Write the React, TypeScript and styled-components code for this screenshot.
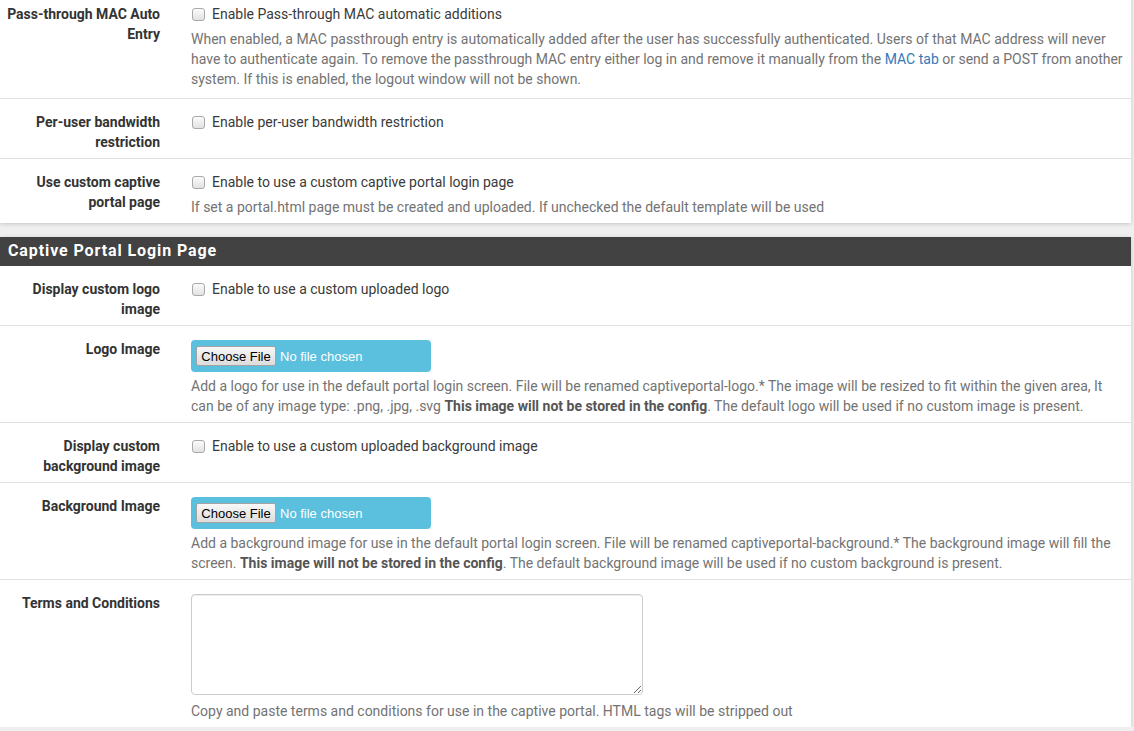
import styled, { createGlobalStyle } from 'styled-components';

const GlobalStyle = createGlobalStyle`
  html, body {
    margin: 0;
    padding: 0;
    background: #efefef;
    font-family: Roboto, "Liberation Sans", Arial, sans-serif;
    font-size: 14px;
    color: #333;
    overflow: hidden;
  }
`;

const Page = styled.div`
  margin-top: -9px;
  padding-right: 3px;
  display: flex;
  flex-direction: column;
  gap: 14px;
`;

const Panel = styled.section`
  background: #fff;
  box-shadow: 0 1px 4px rgba(0, 0, 0, 0.18);
`;

const PanelHeading = styled.h2`
  margin: 0;
  height: 29px;
  padding-left: 8px;
  background: #424242;
  color: #fff;
  font-size: 16px;
  font-weight: 700;
  line-height: 28px;
  letter-spacing: 0.9px;
`;

const Row = styled.div<{ $extra?: number }>`
  display: grid;
  grid-template-columns: 156px 1fr;
  column-gap: 31px;
  padding: 13px 5px ${(p) => 6 + (p.$extra ?? 0)}px 4px;
  border-bottom: 1px solid #e0e0e0;

  &:last-child {
    border-bottom: 0;
  }
`;

const Label = styled.div`
  font-weight: 700;
  text-align: right;
  line-height: 20px;
  color: #333;
`;

const Field = styled.div`
  display: flex;
  flex-direction: column;
  align-items: flex-start;
  min-width: 0;
`;

const CheckLine = styled.label`
  display: flex;
  align-items: center;
  gap: 7px;
  height: 20px;
  line-height: 20px;
  color: #3a3a3a;
`;

const Check = styled.input.attrs({ type: 'checkbox' })`
  appearance: none;
  margin: 0 0 0 1px;
  width: 13px;
  height: 13px;
  border: 1px solid #a9a9a9;
  border-radius: 3px;
  background: linear-gradient(#fbfbfb, #e2e2e2);
  box-sizing: border-box;
`;

const Help = styled.div<{ $gap?: number }>`
  margin-top: ${(p) => p.$gap ?? 5}px;
  color: #737373;
  line-height: 20px;

  a {
    color: #337ab7;
    text-decoration: none;
  }

  strong {
    color: #555;
  }
`;

const FileBox = styled.div`
  margin-top: 1px;
  width: 240px;
  height: 32px;
  box-sizing: border-box;
  padding-left: 5px;
  display: flex;
  align-items: center;
  gap: 4px;
  background: #5bc0de;
  border-radius: 4px;
  font-family: "Liberation Sans", Arial, sans-serif;
  font-size: 13px;
`;

const FileButton = styled.button`
  height: 20px;
  width: 80px;
  padding: 0;
  border: 1px solid #a3a3a3;
  border-radius: 2px;
  background: linear-gradient(#f8f8f8, #dddddd);
  font-family: inherit;
  font-size: 13px;
  color: #000;
`;

const FileName = styled.span`
  color: #fff;
`;

const TextArea = styled.textarea`
  margin-top: 1px;
  width: 452px;
  height: 101px;
  box-sizing: border-box;
  border: 1px solid #ccc;
  border-radius: 4px;
  box-shadow: inset 0 1px 1px rgba(0, 0, 0, 0.075);
  font-family: inherit;
`;

const CheckRow = ({ label, text, help, extra }: { label: string; text: string; help?: React.ReactNode; extra?: number }) => (
  <Row $extra={extra}>
    <Label>{label}</Label>
    <Field>
      <CheckLine>
        <Check />
        {text}
      </CheckLine>
      {help && <Help>{help}</Help>}
    </Field>
  </Row>
);

const FileRow = ({ label, help }: { label: string; help: React.ReactNode }) => (
  <Row>
    <Label>{label}</Label>
    <Field>
      <FileBox>
        <FileButton type="button">Choose File</FileButton>
        <FileName>No file chosen</FileName>
      </FileBox>
      <Help $gap={4}>{help}</Help>
    </Field>
  </Row>
);

const App = () => {
  return (
    <>
      <GlobalStyle />
      <Page>
        <Panel>
          <CheckRow
            extra={3}
            label="Pass-through MAC Auto Entry"
            text="Enable Pass-through MAC automatic additions"
            help={
              <>
                When enabled, a MAC passthrough entry is automatically added after the user has successfully
                authenticated. Users of that MAC address will never have to authenticate again. To remove the
                passthrough MAC entry either log in and remove it manually from the <a href="#">MAC tab</a> or send a
                POST from another system. If this is enabled, the logout window will not be shown.
              </>
            }
          />
          <CheckRow label="Per-user bandwidth restriction" text="Enable per-user bandwidth restriction" />
          <CheckRow
            label="Use custom captive portal page"
            text="Enable to use a custom captive portal login page"
            help="If set a portal.html page must be created and uploaded. If unchecked the default template will be used"
          />
        </Panel>
        <Panel>
          <PanelHeading>Captive Portal Login Page</PanelHeading>
          <CheckRow label="Display custom logo image" text="Enable to use a custom uploaded logo" />
          <FileRow
            label="Logo Image"
            help={
              <>
                Add a logo for use in the default portal login screen. File will be renamed captiveportal-logo.* The
                image will be resized to fit within the given area, It can be of any image type: .png, .jpg, .svg{' '}
                <strong>This image will not be stored in the config</strong>. The default logo will be used if no
                custom image is present.
              </>
            }
          />
          <CheckRow label="Display custom background image" text="Enable to use a custom uploaded background image" />
          <FileRow
            label="Background Image"
            help={
              <>
                Add a background image for use in the default portal login screen. File will be renamed
                captiveportal-background.* The background image will fill the screen.{' '}
                <strong>This image will not be stored in the config</strong>. The default background image will be
                used if no custom background is present.
              </>
            }
          />
          <Row>
            <Label>Terms and Conditions</Label>
            <Field>
              <TextArea />
              <Help $gap={6}>
                Copy and paste terms and conditions for use in the captive portal. HTML tags will be stripped out
              </Help>
            </Field>
          </Row>
        </Panel>
      </Page>
    </>
  );
};

export default App;
